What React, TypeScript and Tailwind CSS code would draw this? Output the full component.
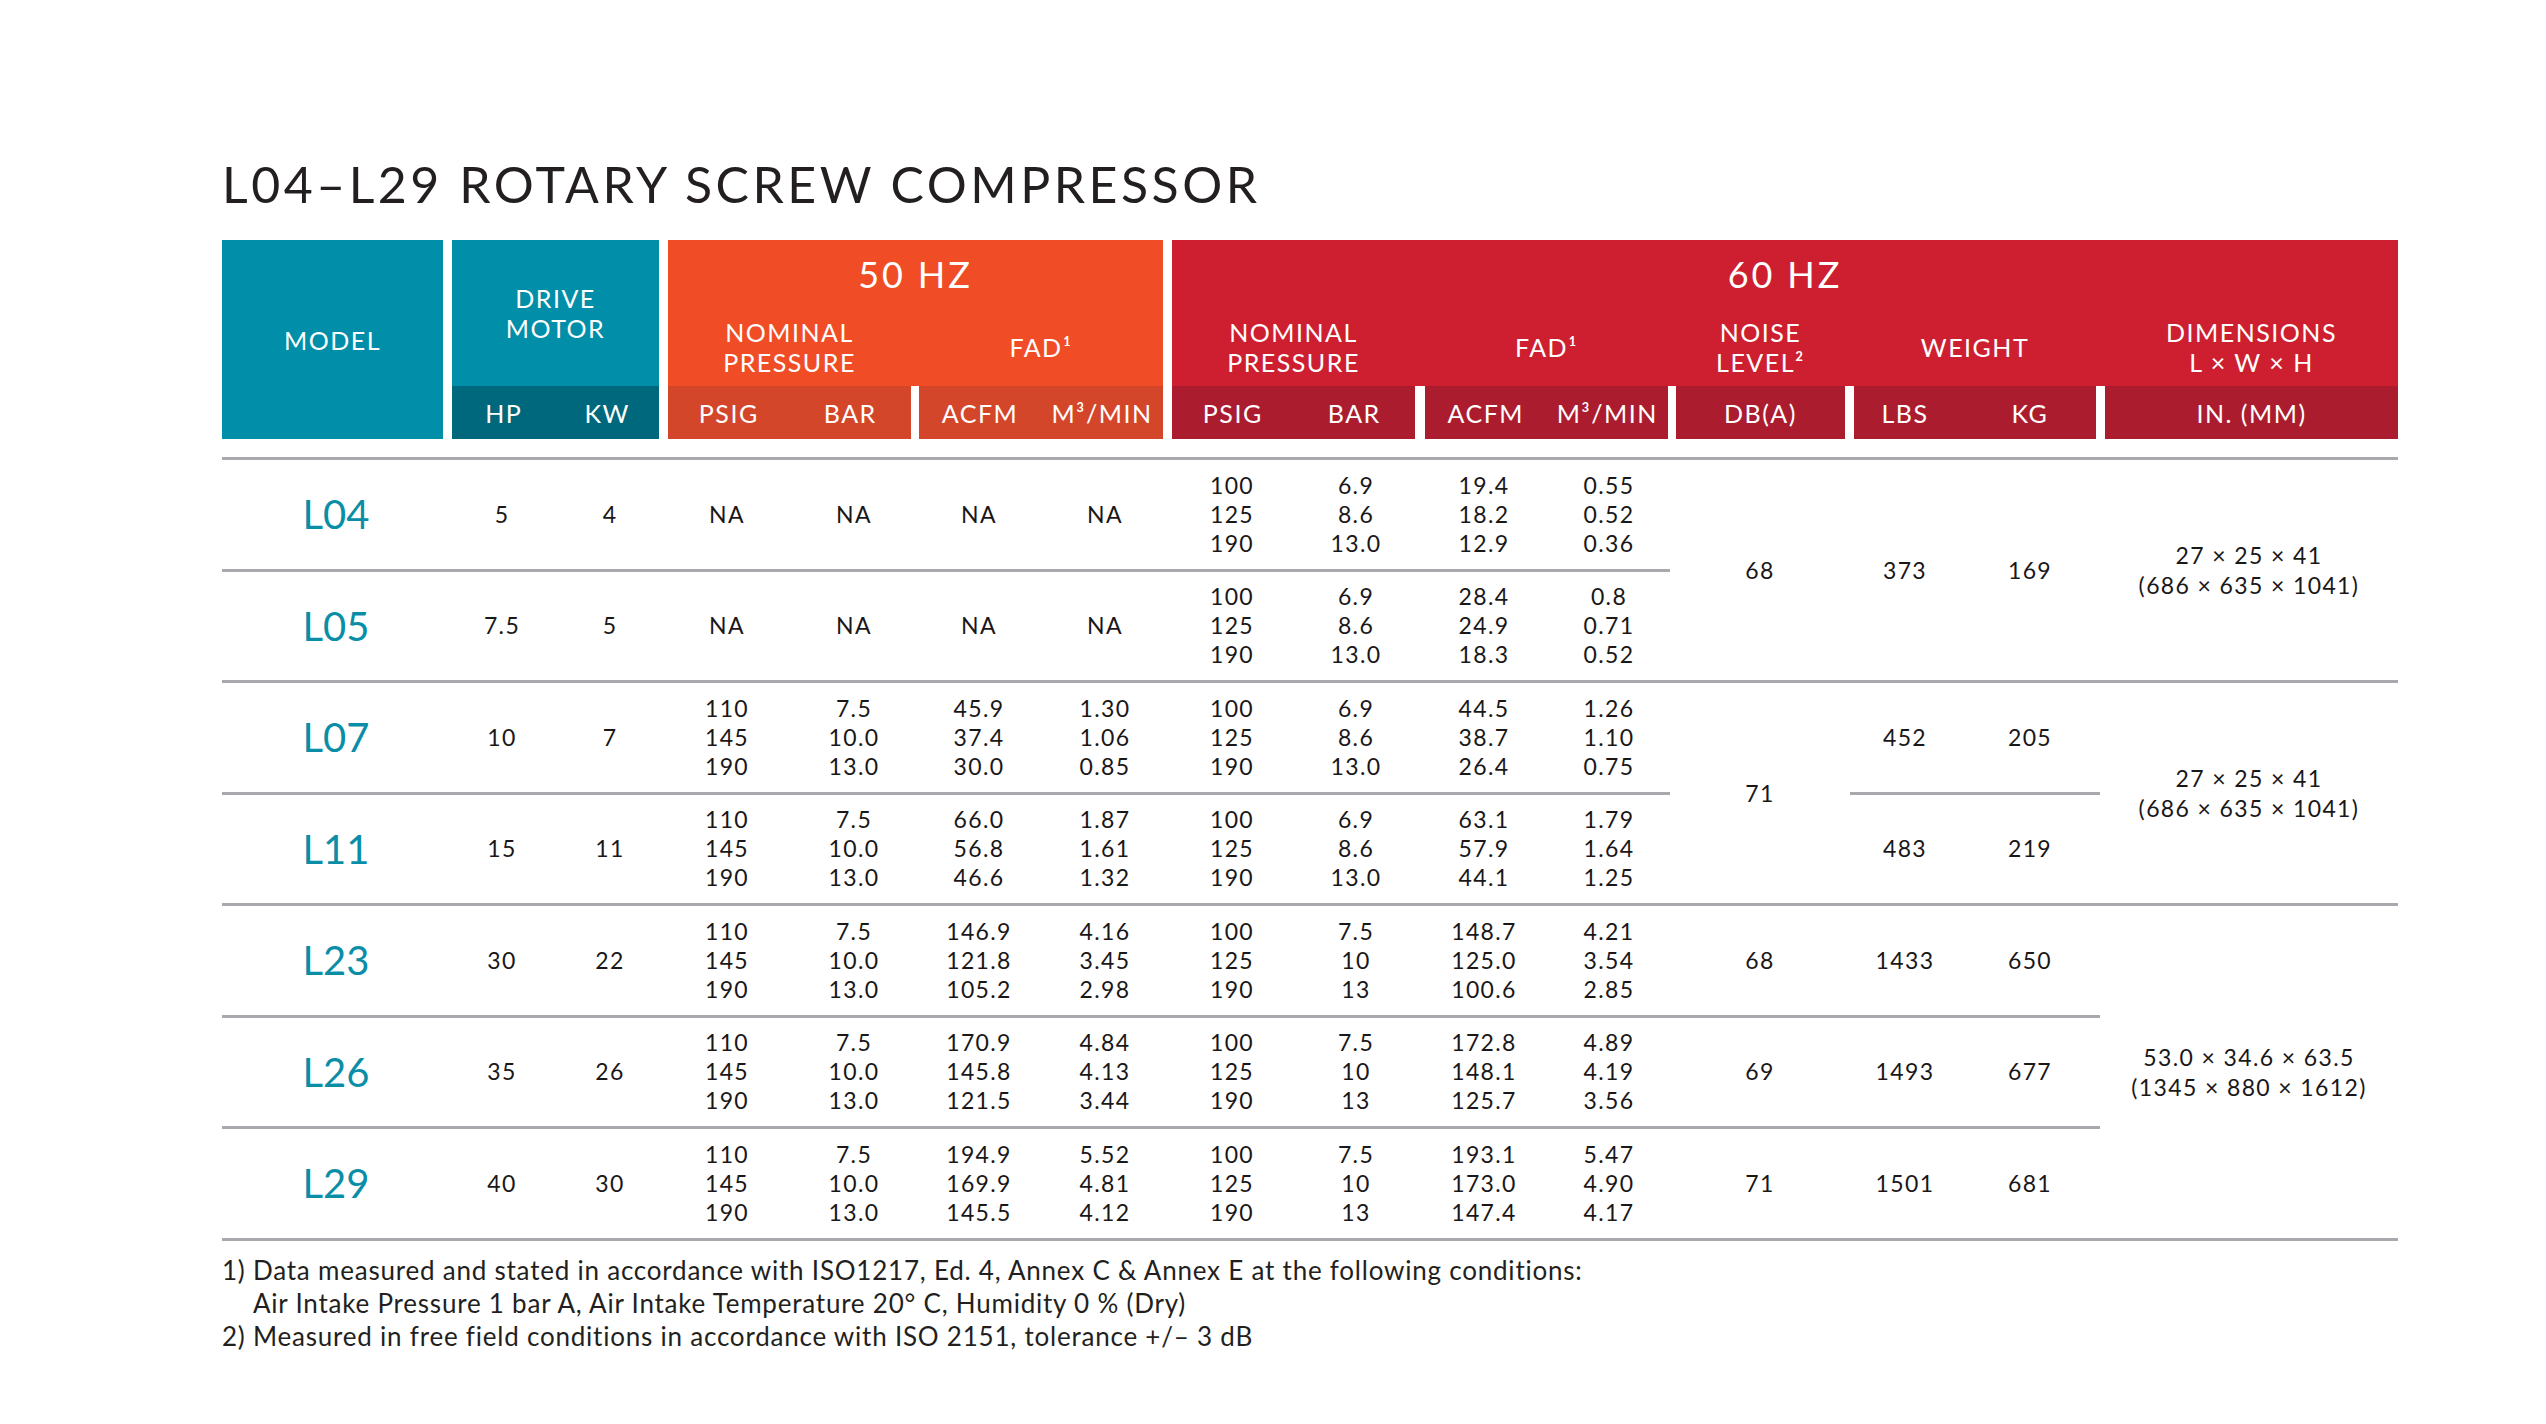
import React from 'react';

type V = string | string[];
type Row = {
  model: string;
  row: string;
  hp: string;
  kw: string;
  p50: V; b50: V; a50: V; m50: V;
  p60: V; b60: V; a60: V; m60: V;
};

const P50 = ['110', '145', '190'];
const B50 = ['7.5', '10.0', '13.0'];
const P60 = ['100', '125', '190'];

const ROWS: Row[] = [
  { model: 'L04', row: 'row-start-2', hp: '5', kw: '4', p50: 'NA', b50: 'NA', a50: 'NA', m50: 'NA', p60: P60, b60: ['6.9', '8.6', '13.0'], a60: ['19.4', '18.2', '12.9'], m60: ['0.55', '0.52', '0.36'] },
  { model: 'L05', row: 'row-start-4', hp: '7.5', kw: '5', p50: 'NA', b50: 'NA', a50: 'NA', m50: 'NA', p60: P60, b60: ['6.9', '8.6', '13.0'], a60: ['28.4', '24.9', '18.3'], m60: ['0.8', '0.71', '0.52'] },
  { model: 'L07', row: 'row-start-6', hp: '10', kw: '7', p50: P50, b50: B50, a50: ['45.9', '37.4', '30.0'], m50: ['1.30', '1.06', '0.85'], p60: P60, b60: ['6.9', '8.6', '13.0'], a60: ['44.5', '38.7', '26.4'], m60: ['1.26', '1.10', '0.75'] },
  { model: 'L11', row: 'row-start-8', hp: '15', kw: '11', p50: P50, b50: B50, a50: ['66.0', '56.8', '46.6'], m50: ['1.87', '1.61', '1.32'], p60: P60, b60: ['6.9', '8.6', '13.0'], a60: ['63.1', '57.9', '44.1'], m60: ['1.79', '1.64', '1.25'] },
  { model: 'L23', row: 'row-start-10', hp: '30', kw: '22', p50: P50, b50: B50, a50: ['146.9', '121.8', '105.2'], m50: ['4.16', '3.45', '2.98'], p60: P60, b60: ['7.5', '10', '13'], a60: ['148.7', '125.0', '100.6'], m60: ['4.21', '3.54', '2.85'] },
  { model: 'L26', row: 'row-start-12', hp: '35', kw: '26', p50: P50, b50: B50, a50: ['170.9', '145.8', '121.5'], m50: ['4.84', '4.13', '3.44'], p60: P60, b60: ['7.5', '10', '13'], a60: ['172.8', '148.1', '125.7'], m60: ['4.89', '4.19', '3.56'] },
  { model: 'L29', row: 'row-start-14', hp: '40', kw: '30', p50: P50, b50: B50, a50: ['194.9', '169.9', '145.5'], m50: ['5.52', '4.81', '4.12'], p60: P60, b60: ['7.5', '10', '13'], a60: ['193.1', '173.0', '147.4'], m60: ['5.47', '4.90', '4.17'] },
];

function Cell({ className, v }: { className: string; v: V }) {
  const list = Array.isArray(v) ? v : [v];
  return (
    <div className={`flex flex-col items-center justify-center ${className}`}>
      {list.map((t, i) => (
        <span key={i} className="leading-[29px]">
          {t}
        </span>
      ))}
    </div>
  );
}

function Line({ className }: { className: string }) {
  return <div className={`bg-[#a7a9ac] ${className}`} />;
}

function Center({ children, className = '' }: { children: React.ReactNode; className?: string }) {
  return <div className={`flex items-center justify-center text-center ${className}`}>{children}</div>;
}

export default function App() {
  return (
    <div className="min-h-[1424px] w-[2546px] bg-white pl-[222px] pt-[159px] font-['Lato',sans-serif] text-[#231f20]">
      <h1 className="text-[50px] leading-[50px] tracking-[0.07em] font-normal">L04–L29 ROTARY SCREW COMPRESSOR</h1>

      {/* Header */}
      <div className="mt-[31px] flex h-[199px] w-[2176px] text-[25px] leading-[30px] tracking-[0.06em] text-white">
        <Center className="w-[221px] bg-[#008ea8]">MODEL</Center>

        <div className="ml-[9px] flex w-[207px] flex-col">
          <Center className="flex-1 bg-[#008ea8]">
            DRIVE
            <br />
            MOTOR
          </Center>
          <div className="flex h-[53px] bg-[#00687c]">
            <Center className="w-1/2">HP</Center>
            <Center className="w-1/2">KW</Center>
          </div>
        </div>

        <div className="ml-[9px] flex w-[495px] flex-col bg-[#f04d26]">
          <Center className="h-[68px] text-[36px] tracking-[0.08em]">50 HZ</Center>
          <div className="flex h-[78px]">
            <Center className="w-[243px]">
              NOMINAL
              <br />
              PRESSURE
            </Center>
            <Center className="ml-[8px] w-[244px]">FAD¹</Center>
          </div>
          <div className="flex h-[53px] bg-white">
            <div className="flex w-[243px] bg-[#d4462a]">
              <Center className="w-1/2">PSIG</Center>
              <Center className="w-1/2">BAR</Center>
            </div>
            <div className="ml-[8px] flex w-[244px] bg-[#d4462a]">
              <Center className="w-1/2">ACFM</Center>
              <Center className="w-1/2">M³/MIN</Center>
            </div>
          </div>
        </div>

        <div className="ml-[9px] flex w-[1226px] flex-col bg-[#ce1f30]">
          <Center className="h-[68px] text-[36px] tracking-[0.08em]">60 HZ</Center>
          <div className="flex h-[78px]">
            <Center className="w-[243px]">
              NOMINAL
              <br />
              PRESSURE
            </Center>
            <Center className="ml-[10px] w-[243px]">FAD¹</Center>
            <Center className="ml-[8px] w-[169px]">
              NOISE
              <br />
              LEVEL²
            </Center>
            <Center className="ml-[9px] w-[242px]">WEIGHT</Center>
            <Center className="ml-[9px] w-[293px]">
              DIMENSIONS
              <br />L × W × H
            </Center>
          </div>
          <div className="flex h-[53px] bg-white">
            <div className="flex w-[243px] bg-[#ab1c2e]">
              <Center className="w-1/2">PSIG</Center>
              <Center className="w-1/2">BAR</Center>
            </div>
            <div className="ml-[10px] flex w-[243px] bg-[#ab1c2e]">
              <Center className="w-1/2">ACFM</Center>
              <Center className="w-1/2">M³/MIN</Center>
            </div>
            <Center className="ml-[8px] w-[169px] bg-[#ab1c2e]">DB(A)</Center>
            <div className="ml-[9px] flex w-[242px] bg-[#ab1c2e]">
              <Center className="w-[102px]">LBS</Center>
              <Center className="w-[140px] pl-[8px]">KG</Center>
            </div>
            <Center className="ml-[9px] w-[293px] bg-[#ab1c2e]">IN. (MM)</Center>
          </div>
        </div>
      </div>

      {/* Body */}
      <div className="mt-[18px] grid w-[2176px] grid-cols-[228px_104px_112px_122px_132px_118px_134px_120px_128px_128px_122px_180px_110px_140px_298px] grid-rows-[3px_108.5px_3px_108.5px_3px_108.5px_3px_108.5px_3px_108.5px_3px_108.5px_3px_108.5px_3px] text-[23px] tracking-[0.06em] text-[#1a1718]">
        <Line className="row-start-1 col-start-1 col-end-16" />
        <Line className="row-start-3 col-start-1 col-end-12" />
        <Line className="row-start-5 col-start-1 col-end-16" />
        <Line className="row-start-7 col-start-1 col-end-12" />
        <Line className="row-start-7 col-start-13 col-end-15" />
        <Line className="row-start-9 col-start-1 col-end-16" />
        <Line className="row-start-11 col-start-1 col-end-15" />
        <Line className="row-start-13 col-start-1 col-end-15" />
        <Line className="row-start-15 col-start-1 col-end-16" />

        {ROWS.map((r) => (
          <React.Fragment key={r.model}>
            <div className={`${r.row} col-start-1 flex items-center justify-center text-[40px] leading-none tracking-normal text-[#0a8ea8]`}>
              {r.model}
            </div>
            <Cell className={`${r.row} col-start-2`} v={r.hp} />
            <Cell className={`${r.row} col-start-3`} v={r.kw} />
            <Cell className={`${r.row} col-start-4`} v={r.p50} />
            <Cell className={`${r.row} col-start-5`} v={r.b50} />
            <Cell className={`${r.row} col-start-6`} v={r.a50} />
            <Cell className={`${r.row} col-start-7`} v={r.m50} />
            <Cell className={`${r.row} col-start-8`} v={r.p60} />
            <Cell className={`${r.row} col-start-9`} v={r.b60} />
            <Cell className={`${r.row} col-start-10`} v={r.a60} />
            <Cell className={`${r.row} col-start-11`} v={r.m60} />
          </React.Fragment>
        ))}

        {/* L04 - L05 merged */}
        <Cell className="col-start-12 row-start-2 row-span-3" v="68" />
        <Cell className="col-start-13 row-start-2 row-span-3" v="373" />
        <Cell className="col-start-14 row-start-2 row-span-3" v="169" />
        <div className="col-start-15 row-start-2 row-span-3 flex flex-col items-center justify-center leading-[30px]">
          <span>27 × 25 × 41</span>
          <span>(686 × 635 × 1041)</span>
        </div>

        {/* L07 - L11 */}
        <Cell className="col-start-12 row-start-6 row-span-3" v="71" />
        <Cell className="col-start-13 row-start-6" v="452" />
        <Cell className="col-start-14 row-start-6" v="205" />
        <Cell className="col-start-13 row-start-8" v="483" />
        <Cell className="col-start-14 row-start-8" v="219" />
        <div className="col-start-15 row-start-6 row-span-3 flex flex-col items-center justify-center leading-[30px]">
          <span>27 × 25 × 41</span>
          <span>(686 × 635 × 1041)</span>
        </div>

        {/* L23 - L29 */}
        <Cell className="col-start-12 row-start-10" v="68" />
        <Cell className="col-start-13 row-start-10" v="1433" />
        <Cell className="col-start-14 row-start-10" v="650" />
        <Cell className="col-start-12 row-start-12" v="69" />
        <Cell className="col-start-13 row-start-12" v="1493" />
        <Cell className="col-start-14 row-start-12" v="677" />
        <Cell className="col-start-12 row-start-14" v="71" />
        <Cell className="col-start-13 row-start-14" v="1501" />
        <Cell className="col-start-14 row-start-14" v="681" />
        <div className="col-start-15 row-start-10 row-span-5 flex flex-col items-center justify-center leading-[30px]">
          <span>53.0 × 34.6 × 63.5</span>
          <span>(1345 × 880 × 1612)</span>
        </div>
      </div>

      {/* Footnotes */}
      <div className="mt-[13px] text-[26px] leading-[33px] tracking-[0.03em]">
        <p>1) Data measured and stated in accordance with ISO1217, Ed. 4, Annex C &amp; Annex E at the following conditions:</p>
        <p className="pl-[31px]">Air Intake Pressure 1 bar A, Air Intake Temperature 20° C, Humidity 0 % (Dry)</p>
        <p>2) Measured in free field conditions in accordance with ISO 2151, tolerance +/– 3 dB</p>
      </div>
    </div>
  );
}
